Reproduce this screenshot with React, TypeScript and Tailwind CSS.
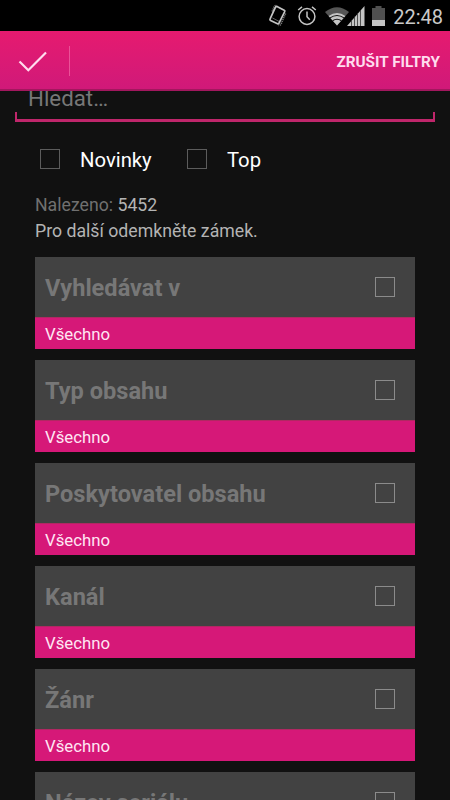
import React, { useState } from 'react';

interface CheckBoxProps {
  checked: boolean;
  onChange: () => void;
  label: string;
  className?: string;
}

const CheckBox: React.FC<CheckBoxProps> = ({ checked, onChange, label, className = 'border-[#5c5c5c]' }) => (
  <button
    role="checkbox"
    aria-checked={checked}
    aria-label={label}
    onClick={onChange}
    className={`w-5 h-5 shrink-0 border ${className} ${checked ? 'bg-[#d61878]' : ''}`}
  />
);

const StatusBar: React.FC = () => (
  <div className="h-[31px] shrink-0 bg-black flex items-center justify-end pr-[7px] text-[#c4c4c4]">
    {/* Vibrate */}
    <svg width="20" height="24" viewBox="0 0 20 24" fill="none" stroke="currentColor" className="mr-[9px]">
      <path d="M9 2.4 16.2 6.2q1 .5.5 1.5L11 19.2q-.5 1-1.5.6L2.6 16.4q-1-.5-.5-1.5L7.5 3.2q.5-1.2 1.5-.8Z" strokeWidth="1.7" />
      <path d="M4.4 13.9 11.4 17.6" strokeWidth="1" opacity=".5" />
      <path d="M4.2 7.5 6 3q.8-2 2.6-1.4M17.6 9.5 13.2 19.6q-.9 2-2.6 1.8" strokeWidth="1.6" strokeDasharray="1.2 .8" opacity=".6" />
    </svg>
    {/* Alarm */}
    <svg width="20" height="22" viewBox="0 0 20 22" fill="none" stroke="currentColor" strokeWidth="1.5" className="mr-2">
      <circle cx="10" cy="11.5" r="7.9" />
      <path d="M10 6.5v5.3l2.8 3M1.2 5 5 1.9M18.8 5 15 1.9" />
    </svg>
    {/* Wi-Fi */}
    <svg width="24" height="20" viewBox="0 0 24 20" className="-mr-[2px]">
      <path d="M0 6Q12-3.5 24 6L12 19.5Z" fill="#555" />
      <path d="M3.6 10Q12 4 20.4 10L12 19.5Z" fill="currentColor" />
      <path d="M5 11.9Q12 7 19 11.9M7.6 14.8q4.4-3 8.8 0" fill="none" stroke="#111" strokeWidth="1.1" />
    </svg>
    {/* Signal */}
    <svg width="18" height="20" viewBox="0 0 18 20" className="mr-[7px]">
      <path d="M0 20 17.5 0v20Z" fill="currentColor" />
      <path d="M4.5 14v6M7.5 10.5V20M10.5 7v13M13.5 4v16" stroke="#333" strokeWidth=".8" />
    </svg>
    {/* Battery */}
    <svg width="13" height="20" viewBox="0 0 13 20" className="mr-[8px]">
      <path d="M3.5 0h6v2H13v12H0V2h3.5Z" fill="#505050" />
      <path d="M0 14h13v6H0Z" fill="currentColor" />
    </svg>
    <span className="text-[20px] leading-[30px] mt-[3px] text-[#cacaca]">22:48</span>
  </div>
);

const ActionBar: React.FC<{ onClear: () => void }> = ({ onClear }) => (
  <header className="h-[60px] shrink-0 flex items-center bg-linear-to-b from-[#e61a6f] to-[#d01979] border-b-2 border-[#a3175e]">
    <button aria-label="Potvrdit" className="pl-[18px] pt-1 text-[#ffdcee]">
      <svg width="30" height="24" viewBox="0 0 30 24" fill="none" stroke="currentColor" strokeWidth="2.2">
        <path d="M1.5 11.5 10.3 20.3 28 2.5" />
      </svg>
    </button>
    <div className="ml-[21px] mt-[2px] w-px h-[30px] bg-[#eb5198]" />
    <button onClick={onClear} className="ml-auto pr-[10px] pt-[4px] text-[15.3px] font-bold text-[#ffdcee]">
      ZRUŠIT FILTRY
    </button>
  </header>
);

interface FilterCardProps {
  title: string;
  checked: boolean;
  onToggle: () => void;
}

const FilterCard: React.FC<FilterCardProps> = ({ title, checked, onToggle }) => (
  <section className="shrink-0">
    <div className="h-[60px] bg-[#424242] flex items-center justify-between pl-[10px] pr-5">
      <h2 className="text-[23.6px] font-bold text-[#777] pt-[3px]">{title}</h2>
      <CheckBox checked={checked} onChange={onToggle} label={title} className="border-[#8b8b8b]" />
    </div>
    <div className="h-8 bg-[#d61878] border-t border-[#b12862] pl-[10px] pt-[2px] flex items-center text-[16.8px] leading-[25px] text-[#ffe6f3]">
      Všechno
    </div>
  </section>
);

const filters = ['Vyhledávat v', 'Typ obsahu', 'Poskytovatel obsahu', 'Kanál', 'Žánr', 'Název seriálu'];

export default function App() {
  const [selected, setSelected] = useState<string[]>([]);

  const toggle = (name: string) => {
    setSelected((prev) => (prev.includes(name) ? prev.filter((n) => n !== name) : [...prev, name]));
  };

  return (
    <div className="w-[450px] h-[800px] overflow-hidden flex flex-col bg-[#111] font-[Roboto,sans-serif]">
      <StatusBar />
      <ActionBar onClear={() => setSelected([])} />

      <main className="flex-1 min-h-0 overflow-hidden flex flex-col">
        {/* Search field, partly scrolled under the action bar */}
        <div className="mx-[15px] -mt-2 shrink-0">
          <div className="h-[29px] pl-[13px] text-[22.3px] leading-[30px] text-[#777]">Hledat…</div>
          <div className="h-[10px] border-2 border-t-0 border-b-3 border-[#c0266b]" />
        </div>

        <div className="mt-[27px] pl-10 h-5 shrink-0 flex items-center text-[20.3px] text-white">
          <CheckBox checked={selected.includes('Novinky')} onChange={() => toggle('Novinky')} label="Novinky" />
          <span className="ml-5 w-[107px] pt-[2px]">Novinky</span>
          <CheckBox checked={selected.includes('Top')} onChange={() => toggle('Top')} label="Top" />
          <span className="ml-5 pt-[2px]">Top</span>
        </div>

        <div className="mt-[23px] pl-[35px] shrink-0 text-[17.7px] leading-[26px] text-[#b4b4b4]">
          <p>
            <span className="text-[#707070]">Nalezeno:</span> 5452
          </p>
          <p>Pro další odemkněte zámek.</p>
        </div>

        <div className="mt-[13px] mx-[35px] flex flex-col gap-[11.1px]">
          {filters.map((title) => (
            <FilterCard key={title} title={title} checked={selected.includes(title)} onToggle={() => toggle(title)} />
          ))}
        </div>
      </main>
    </div>
  );
}
